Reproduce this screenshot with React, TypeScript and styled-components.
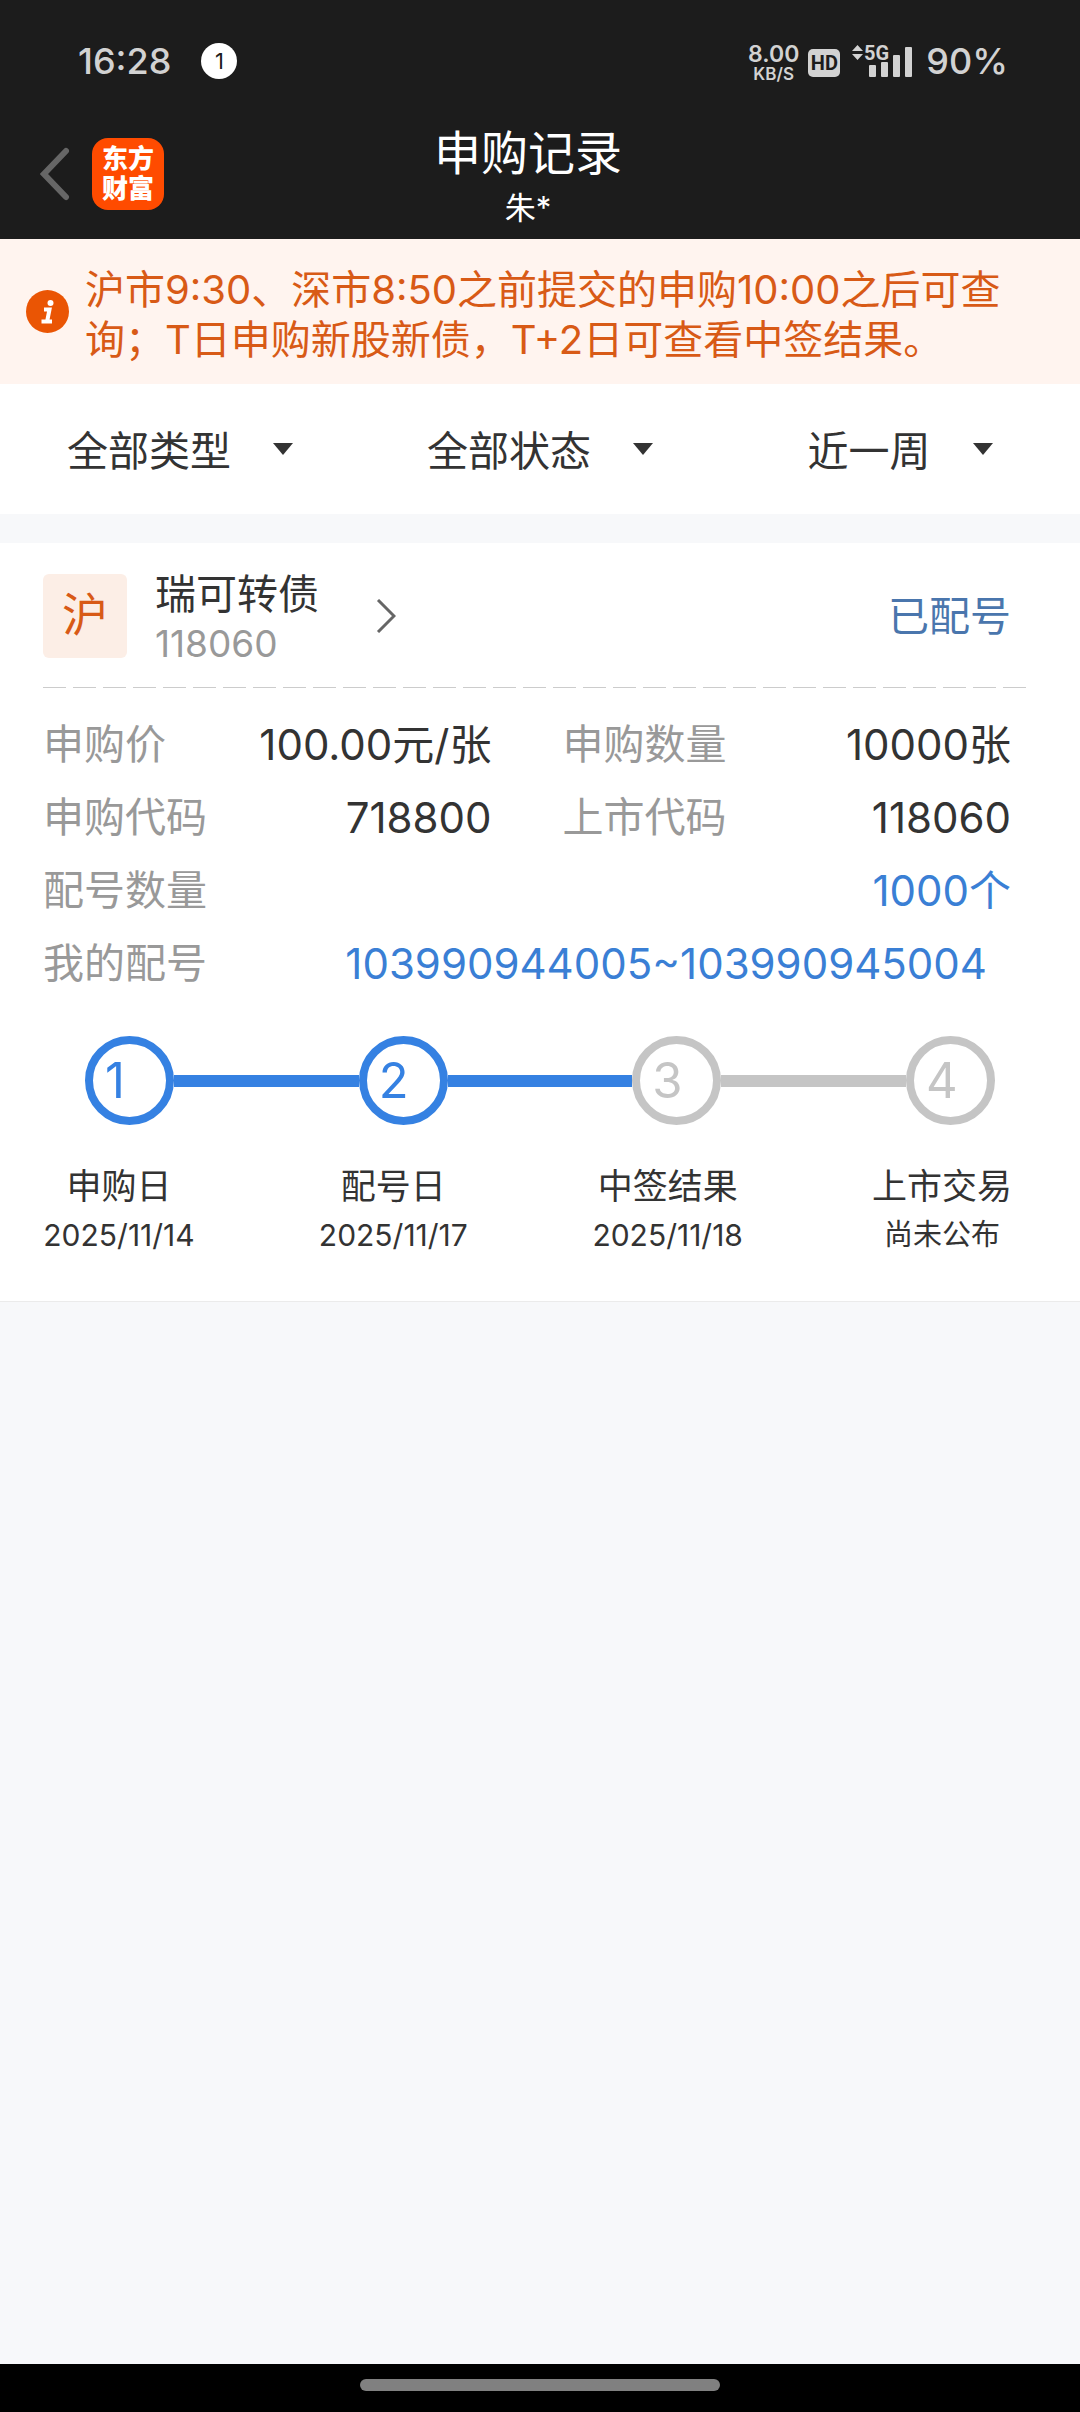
import React from "react";
import styled, { createGlobalStyle } from "styled-components";

const GlobalStyle = createGlobalStyle`
  *, *::before, *::after { box-sizing: border-box; }
  body {
    margin: 0;
    background: #f7f8fa;
    color: #333;
    font-family: Inter, "Noto Sans CJK SC", sans-serif;
    font-size: 41px;
    font-weight: 400;
  }
  h1, h2, p, dl, dd, ol { margin: 0; padding: 0; font-weight: inherit; }
  ol { list-style: none; }
  a { color: inherit; text-decoration: none; }
`;

const Page = styled.div`
  min-height: 100vh;
  display: flex;
  flex-direction: column;
`;

/* ---------- dark header ---------- */

const Header = styled.header`
  background: #1c1c1c;
  color: #fff;
  padding-top: 36px;
`;

const StatusBar = styled.div`
  height: 50px;
  padding: 0 72px 0 78px;
  display: flex;
  align-items: center;
  color: #d2d2d2;
  font-weight: 500;
`;

const StatusText = styled.span`
  font-size: 36px;
  line-height: 50px;
`;

const NoticeDot = styled.span`
  width: 36px;
  height: 36px;
  margin-left: 30px;
  border-radius: 50%;
  background: #fff;
  color: #1c1c1c;
  font-size: 22px;
  line-height: 36px;
  font-weight: 400;
  text-align: center;
`;

const StatusRight = styled.div`
  margin-left: auto;
  display: flex;
  align-items: center;
`;

const NetSpeed = styled.div`
  margin: 4px 9px 0 0;
  display: flex;
  flex-direction: column;
  align-items: center;
  font-size: 23px;
  line-height: 22px;
  font-weight: 600;
  small { font-size: 17px; line-height: 18px; }
`;

const HdBadge = styled.span`
  width: 32px;
  height: 28px;
  margin: 4px 12px 0 0;
  border-radius: 5px;
  background: #d2d2d2;
  color: #1c1c1c;
  font-family: Roboto, sans-serif;
  font-size: 20px;
  line-height: 28px;
  font-weight: 700;
  text-align: center;
`;

const Signal = styled.svg`
  display: block;
  width: 60px;
  height: 44px;
  margin-right: 14px;
`;

const TitleBar = styled.div`
  height: 153px;
  padding: 22px 188px 0 40px;
  display: flex;
  align-items: center;
`;

const BackButton = styled.button`
  padding: 0;
  border: 0;
  background: none;
  display: block;
  svg { display: block; width: 30px; height: 54px; }
`;

const Logo = styled.a`
  width: 72px;
  height: 72px;
  margin-left: 22px;
  border-radius: 16px;
  background: #ff4b00;
  color: #fff;
  display: flex;
  flex-direction: column;
  align-items: center;
  justify-content: center;
  font-size: 26px;
  line-height: 30px;
  font-weight: 900;
`;

const Titles = styled.div`
  flex: 1;
  padding-top: 6px;
  text-align: center;
  h1 { font-size: 47px; line-height: 62px; }
  p { font-size: 31px; line-height: 48px; }
`;

/* ---------- notice ---------- */

const Notice = styled.aside`
  padding: 22px 52px 23px 26px;
  display: flex;
  align-items: center;
  gap: 16px;
  background: #fff4ef;
  color: #d85a16;
  font-size: 40px;
  line-height: 50px;
  svg { flex: none; width: 43px; height: 43px; }
  p { padding-top: 4px; margin-bottom: -4px; }
`;

/* ---------- filters ---------- */

const Filters = styled.form`
  height: 130px;
  display: grid;
  grid-template-columns: repeat(3, 1fr);
  place-items: center;
  background: #fff;
`;

const FilterBox = styled.div`
  display: flex;
  align-items: center;
  svg { width: 20px; height: 12px; margin-left: -20px; pointer-events: none; }
`;

const FilterSelect = styled.select`
  appearance: none;
  margin: 0;
  padding: 4px 62px 0 0;
  border: 0;
  background: none;
  color: #333;
  font: inherit;
  line-height: 60px;
`;

/* ---------- record card ---------- */

const Main = styled.main`
  flex: 1;
  padding-top: 29px;
`;

const Card = styled.article`
  padding: 31px 69px 42px 43px;
  background: #fff;
  border-bottom: 1px solid #ebebeb;
`;

const CardHead = styled.header`
  display: flex;
  align-items: center;
`;

const MarketBadge = styled.span`
  width: 84px;
  height: 84px;
  margin-right: 28px;
  border-radius: 6px;
  background: #fceee6;
  color: #d85a16;
  font-size: 46px;
  line-height: 80px;
  text-align: center;
`;

const BondLink = styled.a`
  display: flex;
  align-items: center;
  gap: 57px;
  svg { width: 20px; height: 34px; }
`;

const BondName = styled.h2`
  font-size: 41px;
  line-height: 40px;
`;

const BondCode = styled.p`
  margin-top: 16px;
  color: #999;
  font-size: 37px;
  line-height: 28px;
`;

const State = styled.span`
  margin-left: auto;
  color: #4a76ad;
  line-height: 50px;
`;

const Dashes = styled.hr`
  height: 1px;
  margin: 29px -19px 20px 0;
  border: 0;
  background: repeating-linear-gradient(90deg, #ccc 0 23px, transparent 23px 30px);
`;

const Details = styled.dl`
  display: grid;
  grid-template-columns: 1fr 1fr;
  column-gap: 71px;
`;

const Detail = styled.div<{ $wide?: boolean; $inset?: boolean }>`
  grid-column: ${(p) => (p.$wide ? "1 / -1" : "auto")};
  padding-right: ${(p) => (p.$inset ? "24px" : "0")};
  display: flex;
  justify-content: space-between;
  line-height: 73px;
  white-space: nowrap;
  dt { color: #999; }
  dd { font-size: 42px; }
  a { color: #3a7fd5; }
`;

const Track = styled.ol`
  margin: 36px 16px 0 42px;
  display: flex;
`;

const TrackStep = styled.li<{ $line?: string }>`
  flex: ${(p) => (p.$line ? "1" : "none")};
  display: flex;
  align-items: center;
  &::after {
    content: "";
    flex: 1;
    height: 12px;
    background: ${(p) => p.$line ?? "none"};
  }
`;

const Circle = styled.span<{ $color: string }>`
  width: 89px;
  height: 89px;
  padding-left: 12px;
  border: 8px solid ${(p) => p.$color};
  border-radius: 50%;
  color: ${(p) => p.$color};
  font-size: 49px;
  line-height: 73px;
`;

const StepLabels = styled.ol`
  margin: 36px -6px 0 1px;
  display: flex;
  justify-content: space-between;
`;

const StepLabel = styled.li`
  width: 150px;
  display: flex;
  flex-direction: column;
  align-items: center;
  white-space: nowrap;
  font-size: 35px;
  line-height: 50px;
  time, small { line-height: 48px; }
  time { font-size: 30px; }
  small { font-size: 29px; }
`;

/* ---------- gesture bar ---------- */

const GestureBar = styled.footer`
  height: 48px;
  padding-top: 15px;
  background: #000;
  &::before {
    content: "";
    display: block;
    width: 33.33%;
    height: 12px;
    margin: 0 auto;
    border-radius: 6px;
    background: #808080;
  }
`;

const BLUE = "#3581e2";
const GREY = "#c5c5c5";

const filters = [
  { id: "type", name: "类型", options: ["全部类型", "新股", "新债"] },
  { id: "state", name: "状态", options: ["全部状态", "已配号", "已中签"] },
  { id: "range", name: "时间", options: ["近一周", "近一月", "近三月"] },
];

const details = [
  { label: "申购价", value: "100.00元/张" },
  { label: "申购数量", value: "10000张" },
  { label: "申购代码", value: "718800" },
  { label: "上市代码", value: "118060" },
  { label: "配号数量", value: "1000个", wide: true },
  { label: "我的配号", value: "103990944005~103990945004", wide: true, inset: true },
];

const steps = [
  { label: "申购日", date: "2025/11/14", color: BLUE, line: BLUE },
  { label: "配号日", date: "2025/11/17", color: BLUE, line: BLUE },
  { label: "中签结果", date: "2025/11/18", color: GREY, line: GREY },
  { label: "上市交易", date: null, color: GREY, line: undefined },
];

export default function App() {
  return (
    <Page lang="zh-CN">
      <GlobalStyle />
      <Header>
        <StatusBar>
          <StatusText>16:28</StatusText>
          <NoticeDot>1</NoticeDot>
          <StatusRight>
            <NetSpeed>
              <span>8.00</span>
              <small>KB/S</small>
            </NetSpeed>
            <HdBadge>HD</HdBadge>
            <Signal viewBox="0 0 60 44" fill="#d2d2d2" aria-hidden="true">
              <path d="M0 12l5.500-6L11 12zM0 15h11l-5.500 6z" />
              <text x="12" y="21" fontSize="20" fontWeight="700" fontFamily="Roboto, sans-serif">
                5G
              </text>
              <rect x="17" y="26" width="7" height="12" rx="1" />
              <rect x="29" y="23" width="7" height="15" rx="1" />
              <rect x="41" y="16" width="7" height="22" rx="1" />
              <rect x="53" y="8" width="7" height="30" rx="1" />
            </Signal>
            <StatusText>90%</StatusText>
          </StatusRight>
        </StatusBar>
        <TitleBar>
          <BackButton type="button" aria-label="返回">
            <svg viewBox="0 0 30 54" fill="none" stroke="#666" strokeWidth="6" strokeLinecap="round">
              <path d="M26 4L4 27l22 23" />
            </svg>
          </BackButton>
          <Logo href="#">
            <span>东方</span>
            <span>财富</span>
          </Logo>
          <Titles>
            <h1>申购记录</h1>
            <p>朱*</p>
          </Titles>
        </TitleBar>
      </Header>

      <Notice>
        <svg viewBox="0 0 43 43" aria-hidden="true">
          <circle cx="21.5" cy="21.5" r="21.5" fill="#ea5504" />
          <circle cx="24.5" cy="13" r="3" fill="#fff" />
          <path d="M18 19.500h5.500L21 32M15.500 31.500h10.500" fill="none" stroke="#fff" strokeWidth="4" />
        </svg>
        <p>沪市9:30、深市8:50之前提交的申购10:00之后可查询；T日申购新股新债，T+2日可查看中签结果。</p>
      </Notice>

      <Filters>
        {filters.map((f) => (
          <FilterBox key={f.id}>
            <FilterSelect id={f.id} aria-label={f.name}>
              {f.options.map((o) => (
                <option key={o}>{o}</option>
              ))}
            </FilterSelect>
            <svg viewBox="0 0 20 12" fill="#333" aria-hidden="true">
              <path d="M0 0h20L10 12z" />
            </svg>
          </FilterBox>
        ))}
      </Filters>

      <Main>
        <Card>
          <CardHead>
            <MarketBadge>沪</MarketBadge>
            <BondLink href="#">
              <div>
                <BondName>瑞可转债</BondName>
                <BondCode>118060</BondCode>
              </div>
              <svg viewBox="0 0 20 34" fill="none" stroke="#666" strokeWidth="3" aria-hidden="true">
                <path d="M2 1l16 16L2 33" />
              </svg>
            </BondLink>
            <State>已配号</State>
          </CardHead>
          <Dashes />
          <Details>
            {details.map((d) => (
              <Detail key={d.label} $wide={d.wide} $inset={d.inset}>
                <dt>{d.label}</dt>
                <dd>{d.wide ? <a href="#">{d.value}</a> : d.value}</dd>
              </Detail>
            ))}
          </Details>
          <Track>
            {steps.map((s, i) => (
              <TrackStep key={s.label} $line={s.line}>
                <Circle $color={s.color}>{i + 1}</Circle>
              </TrackStep>
            ))}
          </Track>
          <StepLabels>
            {steps.map((s) => (
              <StepLabel key={s.label}>
                <span>{s.label}</span>
                {s.date ? <time>{s.date}</time> : <small>尚未公布</small>}
              </StepLabel>
            ))}
          </StepLabels>
        </Card>
      </Main>
      <GestureBar />
    </Page>
  );
}
